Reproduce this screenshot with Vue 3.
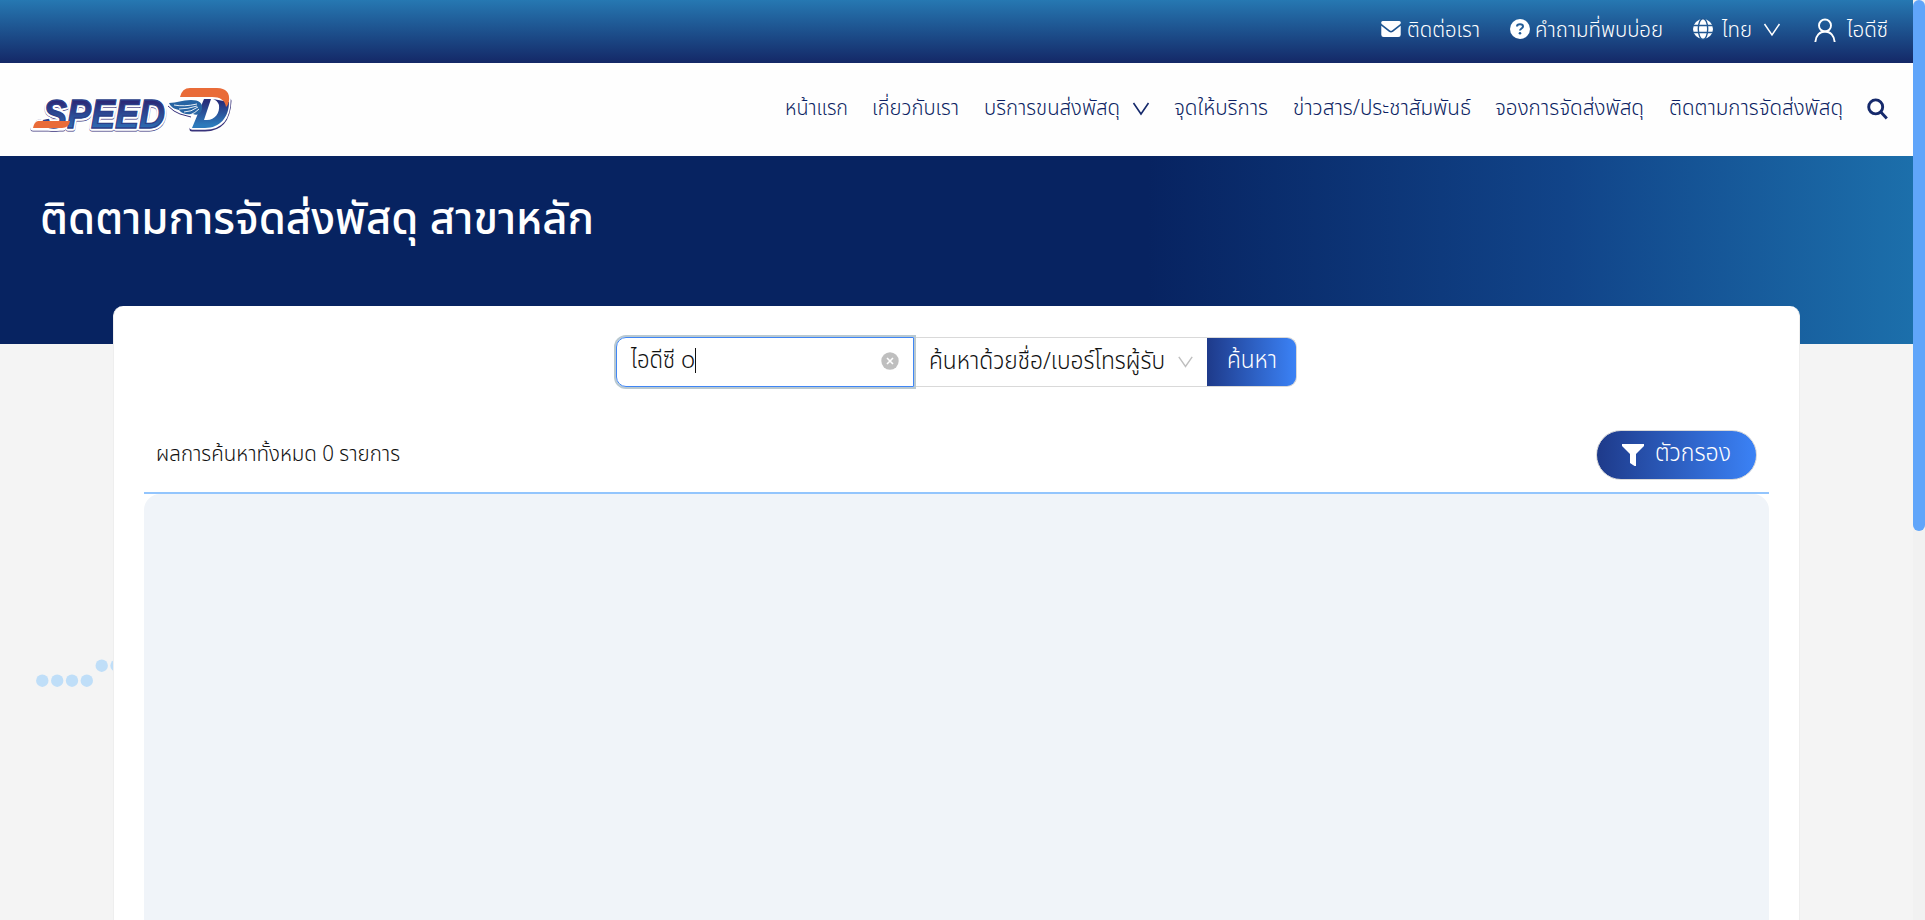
<script setup>
const navItems = [
  { text: 'หน้าแรก', w: 63 },
  { text: 'เกี่ยวกับเรา', w: 87 },
  { text: 'บริการขนส่งพัสดุ', w: 136, menu: true },
  { text: 'จุดให้บริการ', w: 94 },
  { text: 'ข่าวสาร/ประชาสัมพันธ์', w: 178 },
  { text: 'จองการจัดส่งพัสดุ', w: 149 },
  { text: 'ติดตามการจัดส่งพัสดุ', w: 174 },
]
const dots = [[42.3, 50.7], [57.2, 50.7], [72, 50.7], [86.8, 50.7], [101.7, 35.7], [116.5, 35.7]]

// Condenses a label to the given width in pixels.
const vFit = {
  mounted(el, { value }) {
    const natural = el.getBoundingClientRect().width
    el.style.marginRight = `${value - natural}px`
    el.style.transform = `scaleX(${value / natural})`
  },
}
</script>

<template>
  <div class="page">
    <main class="content">
      <div class="topbar">
        <a class="top-item contact">
          <svg width="20" height="18" viewBox="0 0 21 18"><path fill="#fff" d="M2 .5h17a2 2 0 0 1 1.3 3.3l-8.4 6.5a2.2 2.2 0 0 1-2.8 0L.7 3.8A2 2 0 0 1 2 .5zM.3 5.6l8 6.2a3.6 3.6 0 0 0 4.4 0l8-6.2V15a2.5 2.5 0 0 1-2.5 2.5H2.8A2.5 2.5 0 0 1 .3 15z" /></svg>
          <span v-fit="73" class="label">ติดต่อเรา</span>
        </a>
        <a class="top-item faq">
          <svg width="20" height="20" viewBox="0 0 20 20"><circle cx="10" cy="10" r="10" fill="#fff" /><path d="M7 7.6C7 5.9 8.2 5.3 10 5.3s3 .8 3 2.300c0 1.900-3 2-3 4" fill="none" stroke="#235d98" stroke-width="2" /><circle cx="10" cy="14.2" r="1.3" fill="#235d98" /></svg>
          <span v-fit="128" class="label">คำถามที่พบบ่อย</span>
        </a>
        <a class="top-item lang">
          <svg width="20" height="22" viewBox="0 0 20 22"><circle cx="10" cy="11" r="10" fill="#fff" /><g fill="none" stroke="#235993" stroke-width="1.4"><ellipse cx="10" cy="11" rx="4.700" ry="10.500" /><path d="M0 7.500h20M0 14.500h20" /></g></svg>
          <span v-fit="30" class="label">ไทย</span>
          <svg class="chev" width="18" height="14" viewBox="0 0 18 14"><path d="M1.500 1 9 12 16.500 1" fill="none" stroke="#fff" stroke-width="1.500" /></svg>
        </a>
        <a class="top-item user">
          <svg width="22" height="24" viewBox="0 0 22 24"><g fill="none" stroke="#fff" stroke-width="1.900"><circle cx="11" cy="7.500" r="6" /><path d="M1.300 24c.4-6.300 4.400-10.500 9.700-10.500s9.300 4.200 9.700 10.500" /></g></svg>
          <span v-fit="41" class="label">ไอดีซี</span>
        </a>
      </div>

      <header class="nav">
        <svg class="logo" width="206" height="50" viewBox="28 84 206 50">
          <defs>
            <linearGradient id="ink" x1="0" y1="0" x2="0" y2="1">
              <stop offset=".2" stop-color="#2b2674" /><stop offset="1" stop-color="#2d83c6" />
            </linearGradient>
            <linearGradient id="body" x1="0" y1="0" x2="0" y2="1">
              <stop offset=".1" stop-color="#272e7b" /><stop offset=".9" stop-color="#2d7abb" />
            </linearGradient>
          </defs>
          <g class="mark shadow">
            <text x="43" y="128" font-size="41" textLength="122" lengthAdjust="spacingAndGlyphs">SPEED</text>
            <path d="M39 121h28l-4 7H33zM192 128h13c15 0 23-8 24-28l-10-10-17 38z" />
          </g>
          <g class="mark halo">
            <text x="43" y="126.500" font-size="41" textLength="122" lengthAdjust="spacingAndGlyphs">SPEED</text>
            <path d="M39 121h28l-4 6H33zM192 126h13c15 0 23-8 23-28l-10-10-17 36z" />
          </g>
          <g class="mark ink">
            <text x="43" y="127" font-size="41" textLength="122" lengthAdjust="spacingAndGlyphs" fill="url(#ink)">SPEED</text>
          </g>
          <path d="M38 120h32q-1 7-8 7H33q1-6 5-7z" fill="#e96b38" />
          <path d="M204 98h7l-7 21h3c8 0 13-7 12-15-1-3-3-5-6-6l16 3c0 15-9 26-24 26h-13z" fill="url(#body)" />
          <path d="M180 96q2-9 10-9h27c9 0 13 5 12 13-1 4-2 5-3 6-1-7-6-10-14-10z" fill="#e96b38" />
          <path d="M169 102c8 0 13-3 22-3 8 0 12 3 11 9-1 5-5 7-9 5-6 1-11 0-14-4-5-1-8-3-10-7z" fill="#2764a3" />
          <path d="M174 104q10 2 23-1M179 108q9 0 18-3M184 111q7 0 14-5M190 114q5-2 9-6" fill="none" stroke="#fff" stroke-width=".9" />
          <path d="M168 105q6 6 12 8l11 3" fill="none" stroke="#36317c" />
        </svg>
        <nav class="links">
          <a v-for="item in navItems" :key="item.text" class="link">
            <span v-fit="item.w" class="label">{{ item.text }}</span>
            <svg v-if="item.menu" class="caret" width="18" height="14" viewBox="0 0 18 14"><path d="M1.500 1 9 12 16.500 1" fill="none" stroke="#15296b" stroke-width="1.600" /></svg>
          </a>
          <svg class="search-icon" width="21" height="22" viewBox="0 0 21 22"><g fill="none" stroke="#15296b" stroke-width="2.900"><circle cx="8.700" cy="8.900" r="7" /><path d="m13.800 14 6 6.500" /></g></svg>
        </nav>
      </header>

      <section class="hero">
        <h1 class="title"><span v-fit="554" class="label">ติดตามการจัดส่งพัสดุ สาขาหลัก</span></h1>
      </section>

      <svg class="dots" width="125" height="80" viewBox="0 0 125 80"><circle v-for="(d, i) in dots" :key="i" :cx="d[0]" :cy="d[1]" r="6.200" fill="#bfdef8" /></svg>

      <section class="card">
        <div class="search">
          <div class="field">
            <span v-fit="44" class="label">ไอดีซี</span><span class="typed">o</span><i class="cursor"></i>
            <svg class="clear" width="18" height="18" viewBox="0 0 18 18"><circle cx="9" cy="9" r="8.700" fill="#bfbfbf" /><path d="m6 6 6 6m0-6-6 6" stroke="#fff" stroke-width="1.600" /></svg>
          </div>
          <div class="select">
            <span v-fit="236" class="label">ค้นหาด้วยชื่อ/เบอร์โทรผู้รับ</span>
            <svg width="15" height="12" viewBox="0 0 15 12"><path d="M.8.800 7.500 10.500 14.200.8" fill="none" stroke="#bfbfbf" stroke-width="1.400" /></svg>
          </div>
          <button class="submit"><span v-fit="50" class="label">ค้นหา</span></button>
        </div>
        <div class="summary">
          <span v-fit="244" class="label">ผลการค้นหาทั้งหมด 0 รายการ</span>
          <button class="filter">
            <svg width="22" height="22" viewBox="0 0 22 22"><path fill="#fff" d="M0 0h22v2l-8 8v12h-1.500L8 19v-9L0 2z" /></svg>
            <span v-fit="76" class="label">ตัวกรอง</span>
          </button>
        </div>
        <div class="results"></div>
      </section>
    </main>
    <div class="scrollbar"><div class="thumb"></div></div>
  </div>
</template>

<style>
html, body { margin: 0; overflow: hidden; }
</style>

<style scoped>
.page { display: flex; width: 1925px; height: 920px; overflow: hidden; background: #f4f4f4; font-family: "Noto Sans Thai", "Prompt", "Noto Sans", "Open Sans", sans-serif; font-weight: 350; color: #111; }
.content { position: relative; width: 1913px; height: 920px; overflow: hidden; }
.page, .page * { box-sizing: border-box; }
svg { display: block; flex: none; }
.label { display: inline-block; flex: none; white-space: nowrap; transform-origin: left center; }
.topbar { display: flex; justify-content: flex-end; height: 63px; padding: 0 25px 5px 0; color: #fff; background: linear-gradient(#2678b2, #142867); font-size: 21.500px; line-height: 30px; }
.top-item { display: flex; align-items: center; }
.top-item .label { padding-top: 3px; }
.contact { gap: 6px; margin-right: 30px; }
.faq { gap: 5px; margin-right: 30px; }
.lang { gap: 9px; margin-right: 33px; }
.lang .chev { margin: 2px 0 0 2px; }
.user { gap: 11px; }
.user svg { margin-top: 2px; }
.nav { display: flex; align-items: center; justify-content: space-between; height: 93px; padding: 0 25px 0 28px; background: #fefefe; color: #0c1f63; }
.logo { overflow: visible; }
.mark { font-family: "Liberation Sans", Arial, sans-serif; font-weight: bold; font-style: italic; }
.ink { stroke: #2b3f8a; stroke-width: 1.300; }
.shadow { fill: #38337b; stroke: #38337b; stroke-width: 5; stroke-linejoin: round; }
.halo { fill: #fff; stroke: #fff; stroke-width: 5.500; stroke-linejoin: round; }
.links { display: flex; align-items: center; gap: 24.500px; margin-top: -2px; font-size: 21.500px; line-height: 30px; }
.link { display: flex; align-items: center; gap: 12px; }
.search-icon { margin-top: 1px; }
.hero { height: 188px; padding: 35px 40px; background: linear-gradient(90deg, #072361 0, #072361 60%, #114489 82%, #1c6fab 100%); color: #fff; }
.title { margin: 0; font-size: 45px; line-height: 58px; font-weight: 500; }
.dots { position: absolute; left: 0; top: 630px; }
.card { position: relative; width: 1687px; height: 720px; margin: -38px 0 0 113px; padding: 31px 30px 0 30px; border: 1px solid #eee; border-top: 0; border-radius: 10px; background: #fff; }
.search { display: flex; width: 681px; height: 50px; margin-left: 472px; font-size: 24px; line-height: 40px; }
.field { position: relative; z-index: 1; display: flex; align-items: center; width: 298px; padding: 0 14px 3px 14px; border: 1px solid #4086f5; border-radius: 10px 0 0 10px; box-shadow: 0 0 0 2px #b9c9d1; }
.typed { margin-left: 6px; }
.cursor { width: 1px; height: 25px; background: #111; }
.clear { margin: 1px 0 0 auto; }
.select { display: flex; align-items: center; justify-content: space-between; width: 293px; padding: 0 14px 1px 15px; border: 1px solid #d9d9d9; border-width: 1px 0; }
.submit, .filter { display: flex; align-items: center; border: 1px solid #d9d9d9; background: linear-gradient(90deg, #1e3a8a, #3b82f6); color: #fff; font: inherit; }
.submit { width: 90px; padding: 0 0 3px 20px; border-left: 0; border-radius: 0 10px 10px 0; }
.summary { display: flex; align-items: center; justify-content: space-between; height: 107px; padding: 31px 12px 0 12px; border-bottom: 2px solid #93c5fd; font-size: 21.500px; }
.summary > .label { margin-top: -2px; }
.filter { width: 161px; height: 50px; padding: 0 0 0 25px; gap: 11px; border-radius: 25px; font-size: 24px; }
.filter .label { margin-top: -2px; }
.results { height: 440px; border-radius: 16px; background: #f0f4f9; }
.scrollbar { width: 12px; height: 920px; background: #f1f1f1; }
.thumb { height: 531px; border-radius: 6px; background: #60a5fa; }
</style>
